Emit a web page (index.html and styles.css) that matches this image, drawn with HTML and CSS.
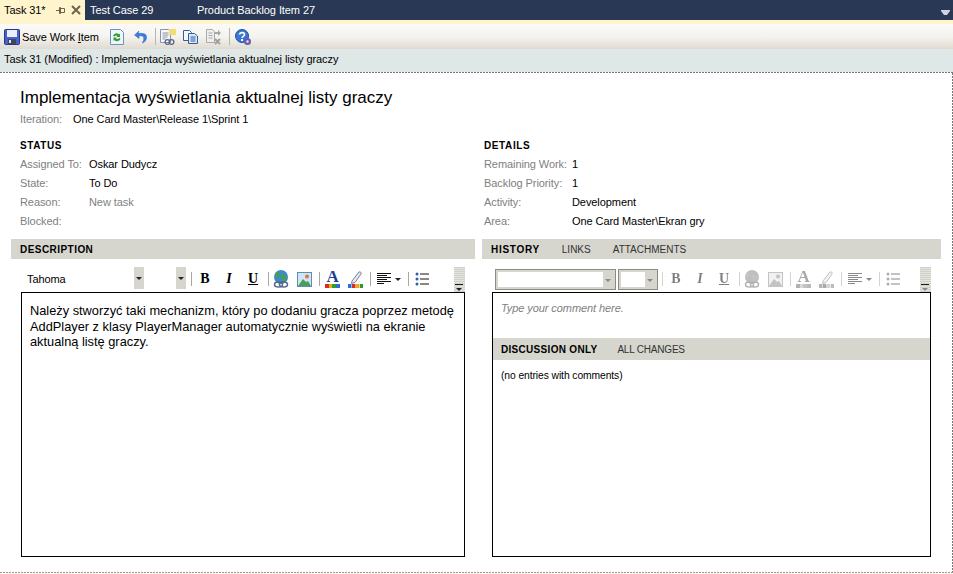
FILE: index.html
```html
<!DOCTYPE html>
<html lang="pl">
<head>
  <meta charset="UTF-8" />
  <title>Task 31</title>
  <link rel="stylesheet" href="styles.css">
</head>
<body>

<svg class="defs" width="0" height="0">
  <symbol id="i-save" viewBox="0 0 16 16">
    <rect x="0.5" y="0.5" width="15" height="15" rx="1" fill="#4a5fc8" stroke="#2a3a80"/>
    <rect x="3" y="1" width="10" height="7" fill="#e8eefc"/>
    <rect x="4" y="10" width="8" height="5" fill="#3d4660"/>
    <rect x="5" y="11" width="2" height="3" fill="#dfe4f0"/>
  </symbol>
  <symbol id="i-refresh" viewBox="0 0 14 16">
    <path d="M.5 .5h10l3 3v12h-13z" fill="#eef5fb" stroke="#6d93b8"/>
    <path d="M3 7a3.500 3.500 0 0 1 6-1.500l1-1v3.500h-3.500l1-1a1.800 1.800 0 0 0-3 .5z" fill="#2f9a2f"/>
    <path d="M10.500 9.500a3.500 3.500 0 0 1-6 1.500l-1 1v-3.500h3.500l-1 1a1.800 1.800 0 0 0 3-.5z" fill="#2f9a2f"/>
  </symbol>
  <symbol id="i-undo" viewBox="0 0 13 14">
    <path d="M5 1 .5 5 5 8.500v-2.500c3-.5 4.500 0 4.800 2 .2 1.800-.5 3.500-1.500 5 3-1 4.500-3.500 4.200-6.500-.4-3-3.500-3.500-8.500-3z" fill="#3a7ee0" stroke="#2a62b8" stroke-width=".5"/>
  </symbol>
  <symbol id="i-link" viewBox="0 0 16 16">
    <path d="M.5 .5h8l2 2v11h-10z" fill="#f6f7fa" stroke="#8a93a5"/>
    <path d="M2.500 4h6M2.500 6h6M2.500 8h5M2.500 10h3" stroke="#8a93a5"/>
    <rect x="9" y="0" width="7" height="6" fill="#f5dc70"/>
    <circle cx="7.500" cy="13" r="2.400" fill="none" stroke="#56688a" stroke-width="1.300"/>
    <circle cx="11.500" cy="13" r="2.400" fill="none" stroke="#56688a" stroke-width="1.300"/>
  </symbol>
  <symbol id="i-copy" viewBox="0 0 15 14">
    <path d="M.5 .5h6l2 2v8h-8z" fill="#f4f7fc" stroke="#2f5f9f"/>
    <path d="M5.500 3.500h6l3 2.500v7.500h-9z" fill="#dbe7f7" stroke="#2f5f9f"/>
    <path d="M7.500 7h5M7.500 9h5M7.500 11h5" stroke="#2f5f9f"/>
  </symbol>
  <symbol id="i-move" viewBox="0 0 16 16">
    <path d="M.5 .5h6l2 2v11h-8z" fill="#eee" stroke="#aaa"/>
    <path d="M2.500 4h4M2.500 6.500h4M2.500 9h4" stroke="#aaa"/>
    <path d="M9 3h3v-2l3 3-3 3v-2h-3z" fill="#a8a8a8"/>
    <path d="M9 10l5 5M14 10l-5 5" stroke="#a0a0a0" stroke-width="2"/>
  </symbol>
  <symbol id="i-help" viewBox="0 0 16 16">
    <circle cx="7" cy="7" r="6.500" fill="#3a78d0" stroke="#1f4f9f"/>
    <path d="M4.500 5.500c.5-2.500 5-2.500 5 0 0 1.800-2.500 1.800-2.500 3.500" fill="none" stroke="#fff" stroke-width="1.600"/>
    <rect x="6" y="10" width="2" height="2" fill="#fff"/>
    <circle cx="12.500" cy="12.500" r="3.500" fill="#6a5ab8"/>
    <circle cx="12.500" cy="12.500" r="1.200" fill="#e8e4f8"/>
  </symbol>
  <symbol id="i-globe" viewBox="0 0 16 18">
    <circle cx="8" cy="7" r="7" fill="#3c8ad0"/>
    <path d="M3 2c3 0 4 2 3 4s-3 2-4 1zM8 5c3-1 5 0 6 3l-3 4c-2 0-2-2-3-4z" fill="#4aa04a"/>
    <ellipse cx="5.500" cy="14.500" rx="4" ry="2.500" fill="none" stroke="#56688a" stroke-width="1.500"/>
    <ellipse cx="10.500" cy="14.500" rx="4" ry="2.500" fill="none" stroke="#56688a" stroke-width="1.500"/>
  </symbol>
  <symbol id="i-pic" viewBox="0 0 15 15">
    <rect x=".5" y=".5" width="14" height="14" fill="#cfe6f5" stroke="#5f8fb0"/>
    <circle cx="10" cy="4.500" r="2" fill="#e8703a"/>
    <path d="M1 14l5-7 3 3 2-1 3 5z" fill="#4c9e5a"/>
  </symbol>
  <symbol id="i-pen" viewBox="0 0 15 18">
    <path d="M4 11 11 2c1-1 3 1 2 2l-6 8.500-3.500 1z" fill="#e6e8f0" stroke="#7a80a0"/>
    <rect x="0" y="14" width="3.500" height="4" fill="#2f6fd0"/>
    <rect x="4" y="14" width="3.500" height="4" fill="#d83020"/>
    <rect x="8" y="14" width="3.500" height="4" fill="#e8a820"/>
    <rect x="12" y="14" width="3" height="4" fill="#2f9a2f"/>
  </symbol>
  <symbol id="i-align" viewBox="0 0 14 12">
    <path d="M0 .5h14M0 2.500h10M0 4.500h14M0 6.500h10M0 8.500h14M0 10.500h7" stroke="#111"/>
  </symbol>
  <symbol id="i-list" viewBox="0 0 14 14">
    <circle cx="2" cy="2" r="1.500" fill="#2f5fa8"/>
    <circle cx="2" cy="7" r="1.500" fill="#2f5fa8"/>
    <circle cx="2" cy="12" r="1.500" fill="#2f5fa8"/>
    <path d="M5 2h9M5 7h9M5 12h9" stroke="#111"/>
  </symbol>
</svg>

<div class="tabbar">
  <div class="tab active">
    <span class="tab-name">Task 31*</span>
    <svg class="tab-pin" width="9" height="9" viewBox="0 0 9 9"><path d="M0 4.500h3M3.500 1.500h1v6h-1zM4.500 2.500h4v4h-4z" fill="none" stroke="#6b654a"/></svg>
    <svg class="tab-close" width="10" height="10" viewBox="0 0 10 10"><path d="M1 1l8 8M9 1l-8 8" stroke="#6b654a" stroke-width="2"/></svg>
  </div>
  <div class="tab second">Test Case 29</div>
  <div class="tab">Product Backlog Item 27</div>
  <svg class="tab-menu" width="9" height="5" viewBox="0 0 9 5"><path d="M0 0h9v1l-3 4h-3l-3-4z" fill="#ced4df"/></svg>
</div>
<div class="tab-edge"></div>

<div class="toolbar">
  <button class="tb-btn"><svg width="16" height="16"><use href="#i-save"/></svg><span>Save Work <u>I</u>tem</span></button>
  <svg class="tb-icon refresh" width="14" height="16"><use href="#i-refresh"/></svg>
  <svg class="tb-icon undo" width="13" height="14"><use href="#i-undo"/></svg>
  <i class="tb-sep first"></i>
  <svg class="tb-icon link" width="16" height="16"><use href="#i-link"/></svg>
  <svg class="tb-icon copy" width="15" height="14"><use href="#i-copy"/></svg>
  <svg class="tb-icon move" width="16" height="16"><use href="#i-move"/></svg>
  <i class="tb-sep"></i>
  <svg class="tb-icon help" width="16" height="16"><use href="#i-help"/></svg>
</div>

<div class="infobar">Task 31 (Modified) : Implementacja wyświetlania aktualnej listy graczy</div>

<main class="form">
  <h1 class="title">Implementacja wyświetlania aktualnej listy graczy</h1>
  <div class="iteration"><span class="lbl">Iteration:</span><span>One Card Master\Release 1\Sprint 1</span></div>

  <div class="columns">
    <section class="fields">
      <h2>STATUS</h2>
      <div class="row"><span class="lbl">Assigned To:</span><span>Oskar Dudycz</span></div>
      <div class="row"><span class="lbl">State:</span><span>To Do</span></div>
      <div class="row"><span class="lbl">Reason:</span><span class="lbl">New task</span></div>
      <div class="row"><span class="lbl">Blocked:</span></div>
    </section>
    <section class="fields details">
      <h2>DETAILS</h2>
      <div class="row"><span class="lbl">Remaining Work:</span><span>1</span></div>
      <div class="row"><span class="lbl">Backlog Priority:</span><span>1</span></div>
      <div class="row"><span class="lbl">Activity:</span><span>Development</span></div>
      <div class="row"><span class="lbl">Area:</span><span>One Card Master\Ekran gry</span></div>
    </section>
  </div>

  <div class="panels">
    <section class="panel left">
      <div class="band"><b>DESCRIPTION</b></div>
      <div class="rte">
        <div class="combo font"><span>Tahoma</span><i class="drop"></i></div>
        <div class="combo size"><i class="drop"></i></div>
        <i class="sep"></i>
        <span class="fmt b">B</span><span class="fmt i">I</span><span class="fmt u">U</span>
        <i class="sep"></i>
        <span class="pic globe"><svg width="16" height="18"><use href="#i-globe"/></svg></span>
        <span class="pic image"><svg width="15" height="15"><use href="#i-pic"/></svg></span>
        <i class="sep"></i>
        <span class="pic"><span class="letter">A<i class="bars"></i></span></span>
        <span class="pic"><svg width="15" height="18"><use href="#i-pen"/></svg></span>
        <i class="sep"></i>
        <span class="pic wide"><svg width="14" height="12"><use href="#i-align"/></svg><i class="caret"></i></span>
        <i class="sep"></i>
        <span class="pic"><svg width="14" height="14"><use href="#i-list"/></svg></span>
        <span class="more"><i class="caret"></i></span>
      </div>
      <div class="box text">Należy stworzyć taki mechanizm, który po dodaniu gracza poprzez metodę AddPlayer z klasy PlayerManager automatycznie wyświetli na ekranie aktualną listę graczy.</div>
    </section>

    <section class="panel right">
      <div class="band"><b>HISTORY</b><span>LINKS</span><span>ATTACHMENTS</span></div>
      <div class="rte off">
        <div class="combo font"><i class="field"></i><i class="drop"></i></div>
        <div class="combo size"><i class="field"></i><i class="drop"></i></div>
        <i class="sep"></i>
        <span class="fmt b">B</span><span class="fmt i">I</span><span class="fmt u">U</span>
        <i class="sep"></i>
        <span class="pic globe"><svg width="16" height="18"><use href="#i-globe"/></svg></span>
        <span class="pic image"><svg width="15" height="15"><use href="#i-pic"/></svg></span>
        <i class="sep"></i>
        <span class="pic"><span class="letter">A<i class="bars"></i></span></span>
        <span class="pic"><svg width="15" height="18"><use href="#i-pen"/></svg></span>
        <i class="sep"></i>
        <span class="pic wide"><svg width="14" height="12"><use href="#i-align"/></svg><i class="caret"></i></span>
        <i class="sep"></i>
        <span class="pic"><svg width="14" height="14"><use href="#i-list"/></svg></span>
        <span class="more"><i class="caret"></i></span>
      </div>
      <div class="box history">
        <div class="comment">Type your comment here.</div>
        <div class="subband"><b>DISCUSSION ONLY</b><span>ALL CHANGES</span></div>
        <div class="entries">(no entries with comments)</div>
      </div>
    </section>
  </div>
</main>

</body>
</html>
```

FILE: styles.css
```css
:root {
  --navy: #293955;
  --band: #d6d6ce;
  --label: #808080;
}

* {
  box-sizing: border-box;
}

body {
  margin: 0;
  height: 574px;
  overflow: hidden;
  display: flex;
  flex-direction: column;
  font-family: "Liberation Sans", sans-serif;
  font-size: 11px;
  letter-spacing: -0.08px;
  color: #000;
  background: #fff8e4;
}

.defs {
  position: absolute;
}

/* tabs */
.tabbar {
  height: 20px;
  flex: none;
  display: flex;
  align-items: center;
  background: var(--navy);
  color: #fff;
}

.tab {
  height: 20px;
  display: flex;
  align-items: center;
}

.tab.active {
  width: 85px;
  padding-left: 4px;
  background: #fff4cc;
  color: #000;
}

.tab.second {
  width: 112px;
  padding-left: 5px;
}

.tab-name {
  width: 52px;
}

.tab-pin {
  margin-right: 6px;
}

.tab-menu {
  margin-left: auto;
  margin-right: 3px;
  margin-top: 5px;
}

.tab-edge {
  height: 4px;
  flex: none;
  background: #fff5cc;
}

/* main toolbar */
.toolbar {
  height: 25px;
  flex: none;
  display: flex;
  align-items: center;
  padding-left: 4px;
  background: linear-gradient(#fbfaf8, #f5f3ef 50%, #e0dbd1);
}

.tb-btn {
  display: flex;
  align-items: center;
  gap: 2px;
  width: 95px;
  padding: 0;
  border: 0;
  background: none;
  font: inherit;
  letter-spacing: inherit;
}

.tb-icon {
  flex: none;
}

.refresh { margin-left: 11px; }
.undo { margin-left: 10px; }
.link { margin-left: 4px; }
.copy { margin-left: 7px; }
.move { margin-left: 8px; }
.help { margin-left: 5px; }

.tb-sep {
  width: 1px;
  height: 17px;
  margin-left: 7px;
  background: #b8b5ac;
}

.tb-sep.first {
  margin-left: 8px;
}

.infobar {
  height: 23px;
  flex: none;
  padding: 4px 0 0 4px;
  background: #dfe7e7;
}

/* form */
.form {
  height: 501px;
  flex: none;
  padding: 1px 12px 1px 11px;
  display: flex;
  flex-direction: column;
  background:
    repeating-linear-gradient(90deg, #777 0 2px, transparent 2px 3px) top / 100% 1px no-repeat,
    repeating-linear-gradient(90deg, #999 0 2px, transparent 2px 3px) bottom / 100% 1px no-repeat,
    repeating-linear-gradient(0deg, #777 0 2px, transparent 2px 3px) right / 1px 100% no-repeat,
    #fff;
}

.title {
  margin: 15px 0 0 9px;
  font-size: 17px;
  font-weight: normal;
  line-height: 20px;
  letter-spacing: 0;
}

.iteration {
  margin: 5px 0 0 9px;
  height: 14px;
  display: flex;
}

.iteration .lbl {
  width: 53px;
}

.lbl {
  color: var(--label);
}

.columns {
  display: grid;
  grid-template-columns: 464px 1fr;
  margin-top: 12px;
}

.fields {
  padding-left: 9px;
}

.fields h2 {
  margin: 0;
  height: 14px;
  font-size: 10px;
  line-height: 14px;
  font-weight: bold;
  letter-spacing: 0.600px;
}

.row {
  display: flex;
  height: 19px;
  padding-top: 5px;
}

.row .lbl:first-child {
  width: 69px;
}

.details .row .lbl:first-child {
  width: 88px;
}

/* panels */
.panels {
  display: grid;
  grid-template-columns: 464px 459px;
  column-gap: 7px;
  margin-top: 10px;
  flex: 1;
}

.band {
  height: 20px;
  display: flex;
  align-items: center;
  gap: 22px;
  padding-left: 9px;
  background: var(--band);
  font-size: 10px;
  color: #333;
  letter-spacing: 0;
}

.band b {
  color: #000;
  letter-spacing: 0.450px;
}

.right .band b {
  letter-spacing: 0.700px;
}

.rte {
  height: 25px;
  margin: 8px 10px 0;
  display: flex;
  align-items: flex-start;
}

.combo {
  display: flex;
  height: 22px;
}

.left .combo.font {
  width: 123px;
  align-items: center;
  padding: 1px 0 0 6px;
}

.left .combo.font .drop {
  margin-top: -1px;
}

.left .combo.font span {
  flex: 1;
}

.left .combo.size {
  width: 42px;
  justify-content: flex-end;
  margin-right: 2px;
}

.drop {
  position: relative;
  width: 10px;
  height: 22px;
  background: var(--band);
}

.drop::after,
.caret::after {
  content: "";
  position: absolute;
  left: 50%;
  top: 50%;
  margin: -1px 0 0 -3px;
  border: 3px solid transparent;
  border-top-color: #222;
  border-bottom: 0;
}

.off .combo {
  margin-top: 2px;
  height: 21px;
  border: 1px solid #8c8c84;
  background: var(--band);
  padding: 2px;
}

.off .combo .drop {
  height: 15px;
  flex: none;
}

.off .drop::after,
.off .caret::after {
  border-top-color: #8a8a8a;
}

.off .combo .field {
  background: #fff;
  flex: 1;
}

.off .combo.font {
  width: 121px;
  margin-left: 3px;
}

.off .combo.size {
  width: 40px;
  margin-left: 2px;
  margin-right: 1px;
}

.sep {
  flex: none;
  width: 1px;
  height: 14px;
  margin: 5px 1px 0 3px;
  background: #a8a8a0;
}

.fmt {
  width: 24px;
  height: 24px;
  flex: none;
  text-align: center;
  line-height: 24px;
  font-family: "Liberation Serif", serif;
  font-size: 14px;
  font-weight: bold;
}

.fmt.i {
  font-style: italic;
}

.fmt.u {
  text-decoration: underline;
}

.pic {
  width: 23px;
  height: 24px;
  flex: none;
  display: flex;
  align-items: center;
  justify-content: center;
}

.pic.globe {
  width: 22px;
}

.pic.image {
  width: 24px;
}

.pic.wide {
  width: 33px;
  justify-content: flex-start;
  padding-left: 5px;
}

.letter {
  display: block;
  width: 15px;
  height: 18px;
  text-align: center;
  font-family: "Liberation Serif", serif;
  font-size: 17px;
  font-weight: bold;
  line-height: 14px;
  color: #1f3f8f;
}

.bars {
  display: block;
  height: 4px;
  background: linear-gradient(90deg, #d83020 0 25%, #e8a820 25% 50%, #2f9a2f 50% 75%, #2f6fd0 75%);
}

.caret {
  position: relative;
  display: block;
  width: 8px;
  height: 8px;
  margin-left: 3px;
}

.more {
  position: relative;
  margin-left: auto;
  width: 11px;
  height: 25px;
  background: repeating-linear-gradient(#d0d0c8 0 1px, #e4e4de 1px 2px);
}

.more .caret {
  position: absolute;
  left: 1px;
  bottom: 0;
  margin: 0;
  border-top: 1px solid #222;
}

.off .fmt,
.off .sep {
  opacity: 0.5;
}

.off .letter {
  opacity: 0.45;
  filter: grayscale(1);
}

.off .pic svg {
  filter: grayscale(1) opacity(0.5);
}

.box {
  height: 265px;
  margin: 0 10px;
  border: 1px solid #000;
  background: #fff;
}

.text {
  padding: 10px 8px;
  font-size: 12.800px;
  line-height: 15.500px;
  letter-spacing: 0;
}

.comment {
  height: 45px;
  padding: 9px 8px;
  font-style: italic;
  color: #808080;
}

.subband {
  height: 22px;
  display: flex;
  align-items: center;
  gap: 20px;
  padding-left: 8px;
  background: var(--band);
  font-size: 10px;
  letter-spacing: -0.200px;
  color: #333;
}

.subband b {
  color: #000;
  letter-spacing: 0.300px;
}

.entries {
  padding: 10px 8px;
  font-size: 10.300px;
}
```
